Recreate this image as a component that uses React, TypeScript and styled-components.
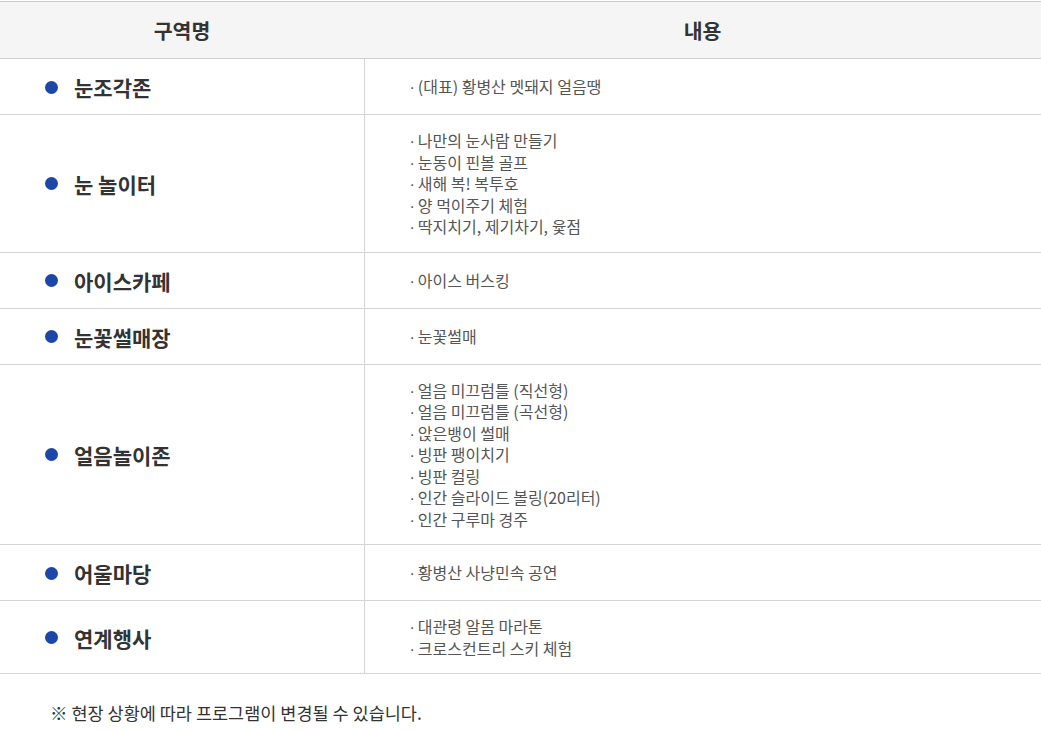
import React from "react";
import styled, { createGlobalStyle } from "styled-components";

const GlobalStyle = createGlobalStyle`
    html, body {
        margin: 0;
        padding: 0;
        background: #fff;
    }
    body {
        font-family: "Noto Sans CJK KR", "Noto Sans", sans-serif;
        color: #333;
    }
`

const Wrapper = styled.div`
    width: 1041px;
    padding-top: 1px;
`

const Table = styled.table`
    width: 100%;
    border-collapse: collapse;
    table-layout: fixed;
    border-top: 1px solid #c9c9c9;
`

const HeadCell = styled.th`
    height: 56px;
    padding: 0;
    background-color: #f5f5f5;
    border-bottom: 1px solid #cfcfcf;
    font-size: 20.5px;
    font-weight: 700;
    color: #333;
    text-align: center;
`

const Row = styled.tr`
    border-bottom: 1px solid #d4d4d4;
`

const NameCell = styled.td`
    padding: 15px 0 14px 45px;
    border-right: 1px solid #d4d4d4;
    vertical-align: middle;
`

const Name = styled.div`
    display: flex;
    align-items: center;
    gap: 16px;
    font-size: 21px;
    line-height: 26px;
    font-weight: 700;
    color: #333;

    &::before {
        content: "";
        flex: none;
        width: 13px;
        height: 13px;
        border-radius: 50%;
        background-color: #1c46a8;
    }
`

const ContentCell = styled.td`
    padding: 15px 0 14px 45px;
    vertical-align: middle;
`

const List = styled.ul`
    list-style: none;
    margin: 0;
    padding: 0;

    li {
        font-size: 16px;
        line-height: 21.5px;
        color: #555;
    }

    li::before {
        content: "·";
        font-family: "Liberation Sans", sans-serif;
        line-height: 0;
        margin-right: 3px;
    }
`

const Note = styled.p`
    margin: 0;
    padding: 26px 0 0 50px;
    font-size: 17.5px;
    line-height: 26px;
    color: #333;
`

const zones = [
    { name: "눈조각존", items: ["(대표) 황병산 멧돼지 얼음땡"] },
    {
        name: "눈 놀이터",
        items: ["나만의 눈사람 만들기", "눈동이 핀볼 골프", "새해 복! 복투호", "양 먹이주기 체험", "딱지치기, 제기차기, 윷점"],
    },
    { name: "아이스카페", items: ["아이스 버스킹"] },
    { name: "눈꽃썰매장", items: ["눈꽃썰매"] },
    {
        name: "얼음놀이존",
        items: [
            "얼음 미끄럼틀 (직선형)",
            "얼음 미끄럼틀 (곡선형)",
            "앉은뱅이 썰매",
            "빙판 팽이치기",
            "빙판 컬링",
            "인간 슬라이드 볼링(20리터)",
            "인간 구루마 경주",
        ],
    },
    { name: "어울마당", items: ["황병산 사냥민속 공연"] },
    { name: "연계행사", items: ["대관령 알몸 마라톤", "크로스컨트리 스키 체험"] },
]

export default function App() {
    return (
        <Wrapper>
            <GlobalStyle />
            <Table>
                <colgroup>
                    <col style={{ width: 364 }} />
                    <col />
                </colgroup>
                <thead>
                    <tr>
                        <HeadCell>구역명</HeadCell>
                        <HeadCell>내용</HeadCell>
                    </tr>
                </thead>
                <tbody>
                    {zones.map((zone) => (
                        <Row key={zone.name}>
                            <NameCell>
                                <Name>{zone.name}</Name>
                            </NameCell>
                            <ContentCell>
                                <List>
                                    {zone.items.map((item) => (
                                        <li key={item}>{item}</li>
                                    ))}
                                </List>
                            </ContentCell>
                        </Row>
                    ))}
                </tbody>
            </Table>
            <Note>※ 현장 상황에 따라 프로그램이 변경될 수 있습니다.</Note>
        </Wrapper>
    )
}
